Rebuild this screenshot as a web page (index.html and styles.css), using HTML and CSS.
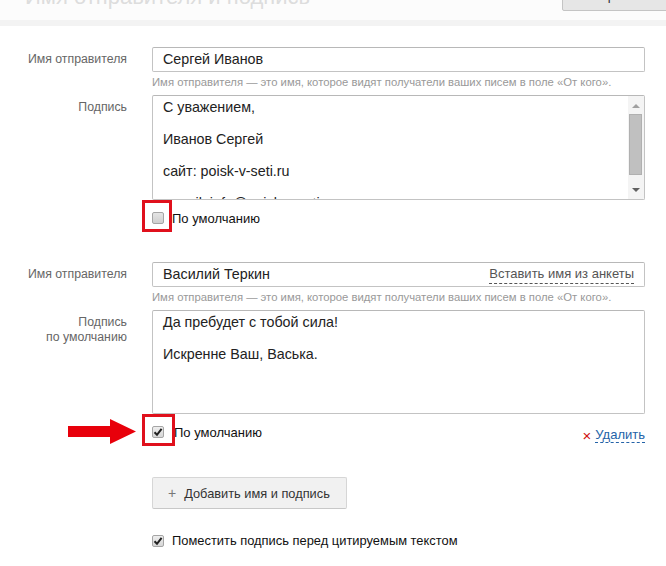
FILE: index.html
```html
<!DOCTYPE html>
<html lang="ru">
<head>
    <meta charset="UTF-8">
    <title>Имя отправителя и подпись</title>
    <link rel="stylesheet" href="styles.css">
</head>
<body>
    <div class="head">
        <h1>Имя отправителя и подпись</h1>
        <button class="head-btn">Сохранить</button>
    </div>

    <div class="settings">
        <div class="signature">
            <div class="row">
                <label class="caption">Имя отправителя</label>
                <div class="field">
                    <div class="input">Сергей Иванов</div>
                    <p class="hint">Имя отправителя — это имя, которое видят получатели ваших писем в поле «От кого».</p>
                </div>
            </div>
            <div class="row">
                <label class="caption caption-text">Подпись</label>
                <div class="field">
                    <div class="textarea">
                        <div class="text">
                            <p>С уважением,</p>
                            <p>Иванов Сергей</p>
                            <p>сайт: poisk-v-seti.ru</p>
                            <p>e-mail: info@poisk-v-seti.ru</p>
                        </div>
                        <div class="scrollbar">
                            <span class="arrow up"></span>
                            <span class="thumb"></span>
                            <span class="track"></span>
                            <span class="arrow down"></span>
                        </div>
                    </div>
                    <div class="options">
                        <label class="check-label">
                            <span class="check marked-a"></span>
                            По умолчанию
                        </label>
                    </div>
                </div>
            </div>
        </div>

        <div class="signature second">
            <div class="row">
                <label class="caption">Имя отправителя</label>
                <div class="field">
                    <div class="input">
                        <span>Василий Теркин</span>
                        <a class="pseudo-link">Вставить имя из анкеты</a>
                    </div>
                    <p class="hint">Имя отправителя — это имя, которое видят получатели ваших писем в поле «От кого».</p>
                </div>
            </div>
            <div class="row">
                <label class="caption caption-text">Подпись<br>по умолчанию</label>
                <div class="field">
                    <div class="textarea tall">
                        <div class="text">
                            <p>Да пребудет с тобой сила!</p>
                            <p>Искренне Ваш, Васька.</p>
                        </div>
                    </div>
                    <div class="options">
                        <label class="check-label">
                            <span class="pointer">
                                <svg width="68" height="25" viewBox="0 0 68 25">
                                    <path d="M0 7 H42 V0 L68 12.5 L42 25 V18 H0 Z" fill="#e8000b"/>
                                </svg>
                            </span>
                            <span class="check checked marked-b">
                                <svg width="10" height="10" viewBox="0 0 10 10"><path d="M1.5 5.2 L4 7.8 L8.6 1.8" fill="none" stroke="#222" stroke-width="2"/></svg>
                            </span>
                            По умолчанию
                        </label>
                        <a class="remove"><span class="cross">×</span><span class="remove-text">Удалить</span></a>
                    </div>
                </div>
            </div>
        </div>

        <div class="row bottom">
            <div></div>
            <div class="field">
                <button class="add-btn"><span class="plus">+</span>Добавить имя и подпись</button>
                <label class="check-label place">
                    <span class="check checked">
                        <svg width="10" height="10" viewBox="0 0 10 10"><path d="M1.5 5.2 L4 7.8 L8.6 1.8" fill="none" stroke="#222" stroke-width="2"/></svg>
                    </span>
                    Поместить подпись перед цитируемым текстом
                </label>
            </div>
        </div>
    </div>
</body>
</html>
```

FILE: styles.css
```css
* {
    box-sizing: border-box;
    margin: 0;
    padding: 0;
}

body {
    background: #fff;
    font-family: "Liberation Sans", Arial, sans-serif;
    color: #222;
    overflow: hidden;
}

.head {
    height: 26px;
    background: #fcfcfc;
    border-bottom: 6px solid #f3f3f3;
    display: flex;
    justify-content: space-between;
    align-items: flex-start;
    overflow: hidden;
}

.head h1 {
    margin: -18px 0 0 25px;
    font-size: 22px;
    font-weight: normal;
    line-height: 30px;
    color: #dddddd;
}

.head-btn {
    margin-top: -20px;
    width: 110px;
    height: 31px;
    margin-right: -6px;
    background: #e6e6e6;
    border: 1px solid #c4c4c4;
    border-radius: 2px;
    font-family: inherit;
    font-size: 13px;
    color: #333;
}

.settings {
    padding-top: 21px;
}

.row {
    display: grid;
    grid-template-columns: 127px 493px;
    column-gap: 25px;
}

.caption {
    text-align: right;
    font-size: 12.3px;
    color: #666;
    line-height: 25px;
}

.caption-text {
    line-height: 15px;
    padding-top: 5px;
}

.input {
    height: 25px;
    border: 1px solid #c3c3c3;
    border-top-color: #b8b8b8;
    border-radius: 2px;
    padding: 0 10px;
    font-size: 14.3px;
    line-height: 23px;
    display: flex;
    justify-content: space-between;
}

.pseudo-link {
    color: #555;
    font-size: 13px;
    border-bottom: 1px dashed #555;
    line-height: 16px;
    height: 18px;
    margin-top: 3px;
}

.hint {
    font-size: 11.3px;
    line-height: 14px;
    color: #999;
    margin: 3px 0 6px;
}

.textarea {
    height: 105px;
    border: 1px solid #c3c3c3;
    border-top-color: #b8b8b8;
    border-radius: 2px;
    display: flex;
    overflow: hidden;
}

.textarea.tall {
    height: 104px;
}

.text {
    flex: 1;
    padding: 3px 10px 0;
    font-size: 14.3px;
    line-height: 17px;
}

.text p {
    margin-bottom: 15px;
}

.scrollbar {
    width: 16px;
    background: #f4f4f4;
    display: flex;
    flex-direction: column;
    align-items: center;
    padding: 0 1px 2px 0;
}

.arrow {
    width: 0;
    height: 0;
    border-left: 4px solid transparent;
    border-right: 4px solid transparent;
    margin: 8px 0 6px;
}

.arrow.up {
    border-bottom: 4px solid #a0a0a0;
}

.arrow.down {
    border-top: 4px solid #606060;
    margin: 6px 0 5px;
}

.thumb {
    width: 13px;
    height: 61px;
    background: #c0c0c0;
    border: 1px solid #b0b0b0;
}

.track {
    flex: 1;
}

.options {
    display: flex;
    justify-content: space-between;
    align-items: center;
    padding-top: 12px;
    height: 24px;
}

.check-label {
    display: flex;
    align-items: center;
    font-size: 13px;
    color: #111;
    position: relative;
}

.check {
    width: 12px;
    height: 12px;
    border: 1px solid #a5a5a5;
    border-radius: 2px;
    background: linear-gradient(#e4e4e4, #cfcfcf);
    margin-right: 8px;
    display: flex;
    align-items: center;
    justify-content: center;
    position: relative;
}

.check.checked {
    background: linear-gradient(#eeeeee, #d6d6d6);
}

.marked-a::after,
.marked-b::after {
    content: "";
    position: absolute;
    box-sizing: border-box;
    border: 3px solid #e0101c;
}

.marked-a::after {
    left: -11px;
    top: -13px;
    width: 30px;
    height: 32px;
}

.marked-b::after {
    left: -11px;
    top: -13px;
    width: 33px;
    height: 32px;
}

.marked-b {
    margin-right: 10px;
}

.pointer {
    position: absolute;
    left: -84px;
    top: -6px;
    line-height: 0;
}

.remove {
    font-size: 13px;
    display: flex;
    align-items: center;
    margin-top: 7px;
}

.cross {
    color: #d01010;
    font-size: 15px;
    margin-right: 4px;
}

.remove-text {
    color: #2463a8;
    border-bottom: 1px dashed #2463a8;
    line-height: 14px;
}

.second {
    margin-top: 38px;
}

.bottom {
    margin-top: 39px;
}

.add-btn {
    width: 195px;
    height: 32px;
    background: #f1f1f1;
    border: 1px solid #d6d6d6;
    border-bottom-color: #c8c8c8;
    border-radius: 2px;
    font-family: inherit;
    font-size: 12.8px;
    color: #333;
    display: flex;
    align-items: center;
    padding-left: 15px;
}

.plus {
    color: #777;
    font-size: 14px;
    margin-right: 8px;
}

.place {
    margin-top: 24px;
    font-size: 12.9px;
}
```
